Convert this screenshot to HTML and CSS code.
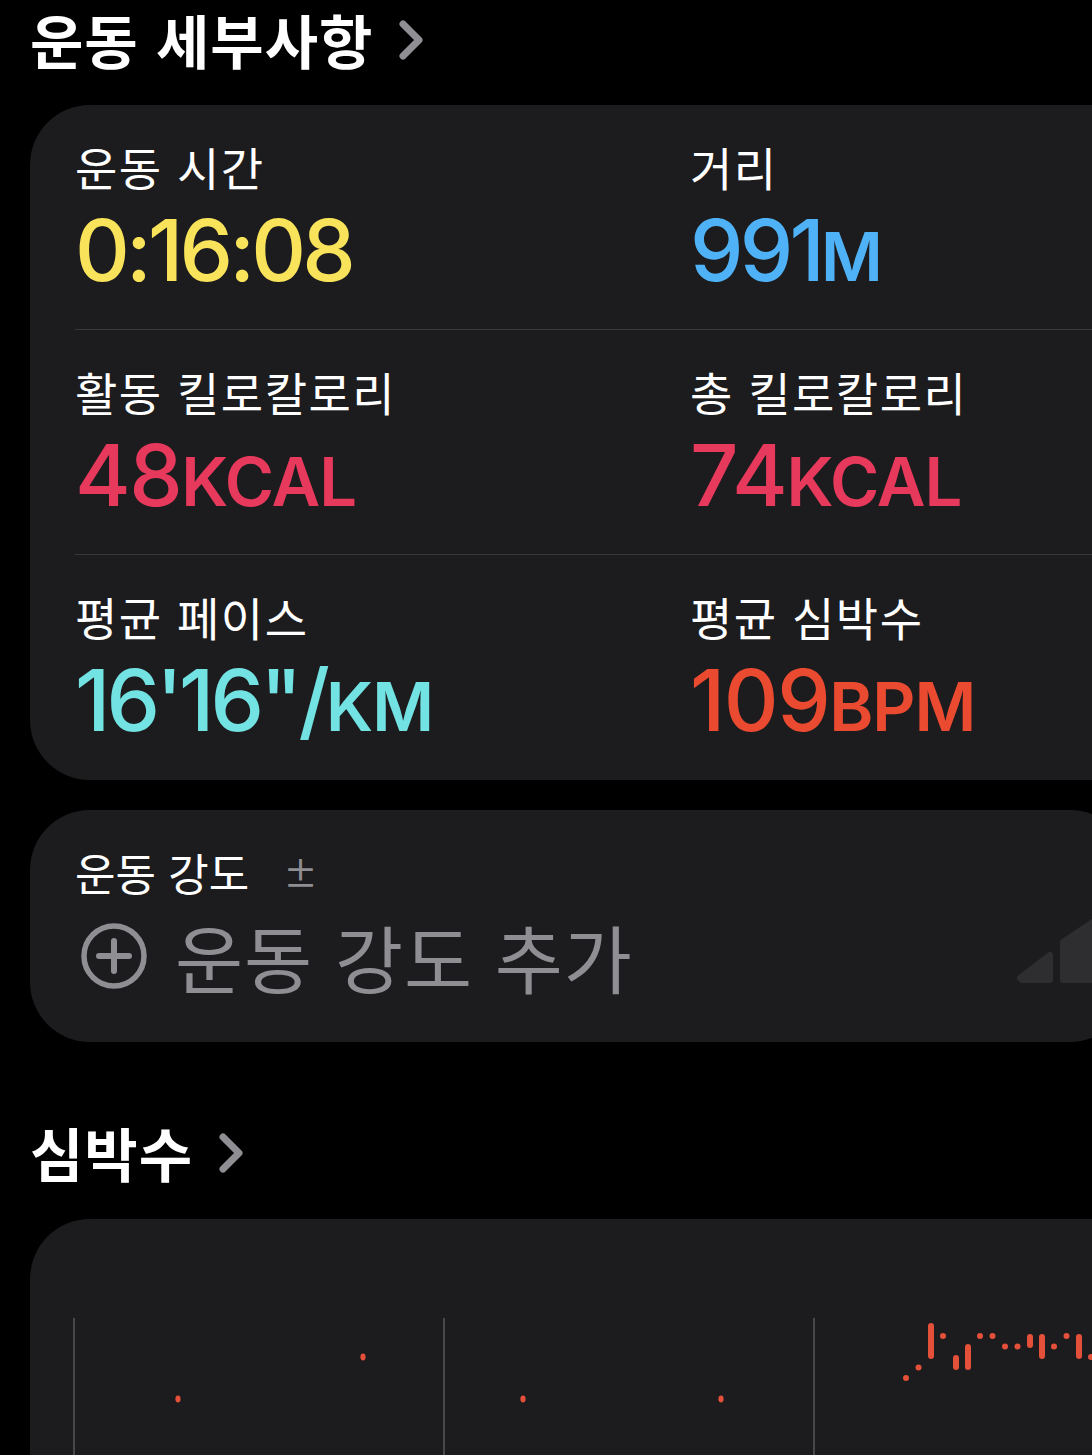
FILE: index.html
```html
<!DOCTYPE html>
<html lang="ko">
<head>
<meta charset="utf-8">
<link rel="stylesheet" href="styles.css">
</head>
<body>
<main class="page">
  <h1 class="section-title"><span>운동 세부사항</span><svg class="chev" viewBox="0 0 28 44" width="28" height="44"><path d="M6 6 L22 22 L6 38" fill="none" stroke="#8e8e93" stroke-width="7" stroke-linecap="round" stroke-linejoin="round"/></svg></h1>

  <section class="card metrics">
    <div class="row">
      <div class="cell">
        <div class="label">운동 시간</div>
        <div class="value yellow narrow">0:16:08</div>
      </div>
      <div class="cell">
        <div class="label">거리</div>
        <div class="value blue narrow">991<span class="unit">M</span></div>
      </div>
    </div>
    <div class="row">
      <div class="cell">
        <div class="label">활동 킬로칼로리</div>
        <div class="value pink">48<span class="unit">KCAL</span></div>
      </div>
      <div class="cell">
        <div class="label">총 킬로칼로리</div>
        <div class="value pink">74<span class="unit">KCAL</span></div>
      </div>
    </div>
    <div class="row">
      <div class="cell">
        <div class="label">평균 페이스</div>
        <div class="value cyan narrow">16'16"/<span class="unit">KM</span></div>
      </div>
      <div class="cell">
        <div class="label">평균 심박수</div>
        <div class="value orange">109<span class="unit">BPM</span></div>
      </div>
    </div>
  </section>

  <section class="card effort">
    <div class="effort-text">
      <div class="label small">운동 강도 <span class="pm">±</span></div>
      <div class="add">
        <svg class="plus" viewBox="0 0 70 70" width="70" height="70"><circle cx="35" cy="35" r="30" fill="none" stroke="#8e8e93" stroke-width="5.5"/><path d="M35 20 V50 M20 35 H50" stroke="#8e8e93" stroke-width="6" stroke-linecap="round"/></svg>
        <span class="add-text">운동 강도 추가</span>
      </div>
    </div>
    <svg class="effort-icon" viewBox="0 0 80 70" width="80" height="70"><path d="M4 60 L34 37 L34 62 L6 62 Z" fill="#2e2e31" stroke="#2e2e31" stroke-width="6" stroke-linejoin="round"/><path d="M47 24 L80 2 L80 62 L47 62 Z" fill="#2e2e31" stroke="#2e2e31" stroke-width="6" stroke-linejoin="round"/></svg>
  </section>

  <h2 class="section-title second"><span>심박수</span><svg class="chev" viewBox="0 0 28 44" width="28" height="44"><path d="M6 6 L22 22 L6 38" fill="none" stroke="#8e8e93" stroke-width="7" stroke-linecap="round" stroke-linejoin="round"/></svg></h2>

  <section class="card chart">
    <svg class="plot" viewBox="0 0 1070 160" width="1070" height="160">
      <g stroke="#48484a" stroke-width="2">
        <line x1="44" y1="0" x2="44" y2="160"/>
        <line x1="414" y1="0" x2="414" y2="160"/>
        <line x1="784" y1="0" x2="784" y2="160"/>
      </g>
      <g fill="#e4503a">
        <ellipse cx="148" cy="81" rx="2.6" ry="3.4"/>
        <ellipse cx="333" cy="39" rx="2.6" ry="3.4"/>
        <ellipse cx="493" cy="81" rx="2.6" ry="3.4"/>
        <ellipse cx="691" cy="81" rx="2.6" ry="3.4"/>
        <circle cx="876" cy="60" r="3"/>
        <circle cx="888.5" cy="49.5" r="3"/>
        <circle cx="913" cy="18" r="3"/>
        <circle cx="950" cy="18" r="3"/>
        <circle cx="962.5" cy="18" r="3"/>
        <circle cx="975" cy="28.5" r="3"/>
        <circle cx="987.5" cy="28.5" r="3"/>
        <circle cx="1024" cy="28.5" r="3"/>
        <circle cx="1036.5" cy="18" r="3"/>
        <circle cx="1061" cy="39" r="3"/>
      </g>
      <g stroke="#e4503a" stroke-width="6" stroke-linecap="round">
        <line x1="901" y1="8" x2="901" y2="38"/>
        <line x1="926" y1="40" x2="926" y2="49"/>
        <line x1="938" y1="29" x2="938" y2="49"/>
        <line x1="1000" y1="19" x2="1000" y2="27"/>
        <line x1="1012" y1="19" x2="1012" y2="38"/>
        <line x1="1049" y1="19" x2="1049" y2="38"/>
      </g>
    </svg>
  </section>
</main>
</body>
</html>
```
FILE: styles.css
```css
html, body {
  margin: 0;
  padding: 0;
  background: #000;
  width: 1092px;
  height: 1455px;
  overflow: hidden;
}

.page {
  padding-left: 30px;
  font-family: "Noto Sans CJK KR", "Noto Sans", sans-serif;
  color: #fff;
}

.section-title {
  margin: 0;
  padding-top: 3px;
  font-size: 58px;
  font-weight: 700;
  line-height: 72px;
  display: flex;
  align-items: center;
  gap: 24px;
  height: 72px;
  margin-bottom: 30px;
  letter-spacing: 1px;
  white-space: nowrap;
}

.section-title .chev {
  margin-top: 2px;
}

.section-title.second {
  margin-top: 71px;
  margin-bottom: 31px;
}

.card {
  background: #1c1c1e;
  border-radius: 60px 0 0 60px;
  width: 1100px;
  box-sizing: border-box;
}

.metrics {
  padding-left: 45px;
}

.row {
  display: flex;
  height: 225px;
  box-sizing: border-box;
  border-bottom: 1.5px solid #38383a;
}

.row:last-child {
  border-bottom: none;
}

.cell {
  flex: none;
  width: 615px;
  padding-top: 34px;
  box-sizing: border-box;
}

.label {
  font-size: 46px;
  line-height: 54px;
  font-weight: 400;
  color: #fff;
  letter-spacing: 1.5px;
}

.label.small {
  font-size: 44px;
  line-height: 52px;
  letter-spacing: 0;
}

.value {
  font-family: "Inter", "Noto Sans", sans-serif;
  font-size: 85px;
  font-weight: 500;
  line-height: 100px;
  letter-spacing: -1.5px;
  margin-top: 8px;
  white-space: nowrap;
}

.value.narrow {
  letter-spacing: -3.8px;
}

.unit {
  font-size: 67px;
  font-weight: 600;
  letter-spacing: -1px;
}

.yellow { color: #f9e35a; }
.blue { color: #4fb2f7; }
.pink { color: #e6395c; }
.cyan { color: #72e2e2; }
.orange { color: #ea4a30; }

.effort {
  margin-top: 30px;
  height: 232px;
  padding-left: 45px;
  display: flex;
  border-radius: 60px;
  position: relative;
}

.effort-text {
  padding-top: 36px;
}

.pm {
  font-size: 34px;
  font-weight: 500;
  color: #8e8e93;
  margin-left: 22px;
  vertical-align: 4px;
}

.add {
  display: flex;
  align-items: center;
  gap: 26px;
  margin-top: 12px;
  margin-left: 4px;
}

.add-text {
  font-size: 74px;
  line-height: 90px;
  color: #8e8e93;
  letter-spacing: 1px;
}

.effort-icon {
  position: absolute;
  left: 986px;
  top: 108px;
}

.chart {
  height: 340px;
  border-radius: 60px 0 0 0;
  padding-top: 99px;
}

.plot {
  display: block;
}
```
